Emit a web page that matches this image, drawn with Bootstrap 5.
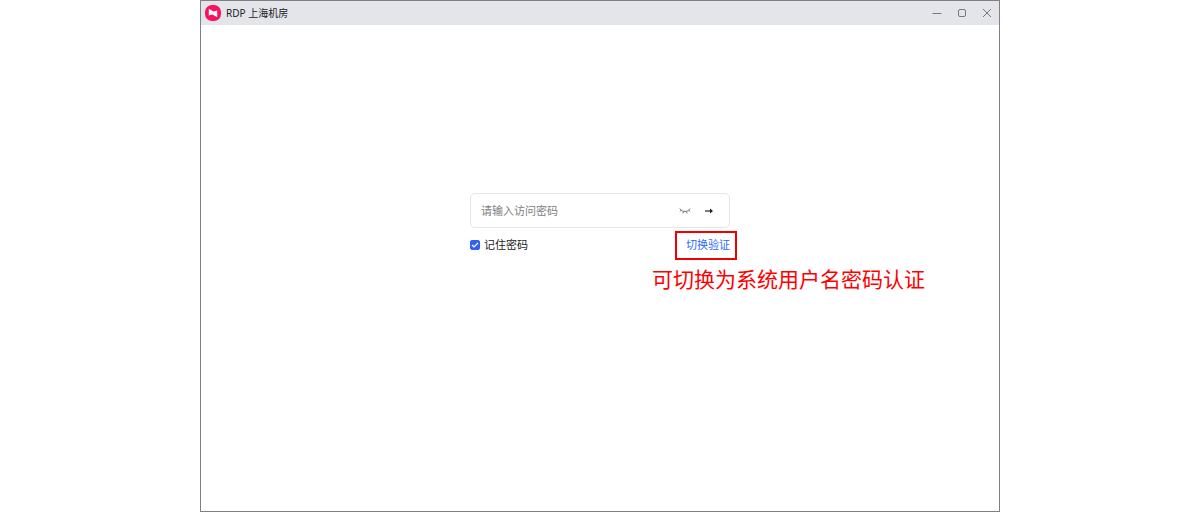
<!DOCTYPE html>
<html lang="zh-CN">
<head>
<meta charset="utf-8">
<meta name="viewport" content="width=device-width, initial-scale=1">
<title>RDP 上海机房</title>
<link href="https://cdn.jsdelivr.net/npm/bootstrap@5.3.0/dist/css/bootstrap.min.css" rel="stylesheet">
<style>
  body { font-family: "Noto Sans", "Noto Sans CJK SC", sans-serif; font-size: 11px; line-height: 16px; color: #222; background: #fff; }
  .app-window { max-width: 800px; border: 1px solid #808080; }
  .title-bar { background: #e4e5eb; height: 24px; padding: 0 0 0 4px; gap: 5px; }
  .app-name { font-size: 10px; line-height: 14px; color: #222; padding-bottom: 1px; }
  .win-btn { width: 25px; height: 24px; color: #777; }
  .window-body { padding-top: 168px; }
  .login-form { width: 260px; }
  .pass-box { border: 1px solid #e5e6eb; border-radius: 5px; padding: 0 12px 0 10px; height: 35px; }
  .pass-box .form-control { font-size: 11px; line-height: 16px; color: #222; }
  .pass-box .form-control::placeholder { color: #808080; opacity: 1; }
  .icon-btn { width: 16px; height: 16px; }
  .options-row { margin-top: 3px; }
  .remember { padding-bottom: 2px; }
  .remember .form-check-input { width: 10px; height: 10px; border-radius: 2px; }
  .remember .form-check-input:checked {
    background-color: #2f62f0; border-color: #2f62f0; background-size: 8px 8px;
    background-image: url("data:image/svg+xml,%3Csvg xmlns='http://www.w3.org/2000/svg' viewBox='0 0 8 8'%3E%3Cpath d='M1 4l2 2 4-4' fill='none' stroke='%23fff' stroke-width='1.200'/%3E%3C/svg%3E");
  }
  .marked { border: 2px solid #f00000; height: 29px; padding: 0 5px 2px 9px; margin-right: -7px; }
  .marked a { color: #2f6bff; }
  .note { left: -25px; top: 33px; font-size: 21px; line-height: 26px; color: #f00; }
</style>
</head>
<body>
<main class="app-window mx-auto vh-100 d-flex flex-column">
  <header class="title-bar d-flex align-items-center">
    <svg width="16" height="16" viewBox="0 0 16 16" aria-hidden="true">
      <rect width="16" height="16" rx="7" fill="#f5125f"/>
      <path d="M3.800 3.800 8.600 6.400 12.200 5.400V12.200L7.400 9.600 3.800 10.600Z" fill="#fff"/>
    </svg>
    <span class="app-name">RDP 上海机房</span>
    <div class="d-flex ms-auto">
      <button type="button" class="win-btn btn p-0 border-0 d-flex align-items-center justify-content-center" aria-label="最小化">
        <svg width="10" height="10" viewBox="0 0 10 10" stroke="currentColor" fill="none"><path d="M.5 5.500H9.500"/></svg>
      </button>
      <button type="button" class="win-btn btn p-0 border-0 d-flex align-items-center justify-content-center" aria-label="最大化">
        <svg width="10" height="10" viewBox="0 0 10 10" stroke="currentColor" fill="none"><rect x="1.500" y="1.500" width="7" height="7" rx="1.500"/></svg>
      </button>
      <button type="button" class="win-btn btn p-0 border-0 d-flex align-items-center justify-content-center" aria-label="关闭">
        <svg width="10" height="10" viewBox="0 0 10 10" stroke="currentColor" fill="none"><path d="m1 1 8 8M9 1 1 9"/></svg>
      </button>
    </div>
  </header>
  <section class="window-body flex-grow-1">
    <form class="login-form mx-auto">
      <div class="pass-box d-flex align-items-center gap-2">
        <input type="password" class="form-control border-0 shadow-none p-0" placeholder="请输入访问密码" aria-label="访问密码">
        <button type="button" class="icon-btn btn p-0 border-0 d-flex align-items-center justify-content-center flex-shrink-0" aria-label="显示密码">
          <svg width="12" height="12" viewBox="0 0 12 12" stroke="#777" fill="none"><path d="M.8 3.500C3 7.500 9 7.500 11.200 3.500M2.200 5.200.8 6.500M4.500 6.400 4 8.500M7.500 6.400 8 8.500M9.800 5.200l1.400 1.300"/></svg>
        </button>
        <button type="submit" class="icon-btn btn p-0 border-0 d-flex align-items-center justify-content-center flex-shrink-0" aria-label="登录">
          <svg width="10" height="10" viewBox="0 0 10 10"><path d="M1 5H7" stroke="#222" stroke-width="1.200"/><path d="M6 2.500 9 5 6 7.500Z" fill="#222"/></svg>
        </button>
      </div>
      <div class="options-row d-flex align-items-center justify-content-between">
        <div class="remember d-flex align-items-center gap-1">
          <input class="form-check-input m-0" type="checkbox" id="remember" checked>
          <label for="remember">记住密码</label>
        </div>
        <div class="marked position-relative d-flex align-items-center">
          <a href="#" class="text-decoration-none">切换验证</a>
          <div class="note position-absolute text-nowrap">可切换为系统用户名密码认证</div>
        </div>
      </div>
    </form>
  </section>
</main>
<script src="https://cdn.jsdelivr.net/npm/bootstrap@5.3.0/dist/js/bootstrap.bundle.min.js"></script>
</body>
</html>
